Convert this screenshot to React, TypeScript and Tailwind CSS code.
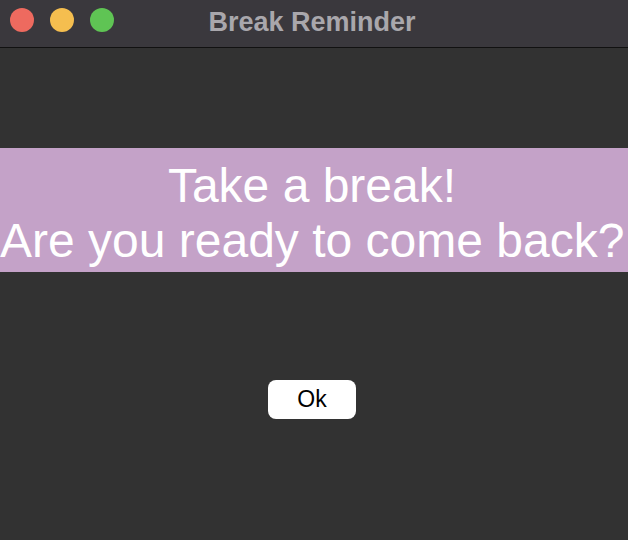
export default function App() {
  return (
    <div className="w-[628px] h-[540px] bg-[#323232] flex flex-col overflow-hidden" style={{ fontFamily: '"Liberation Sans", Arial, sans-serif' }}>
      <div className="relative h-[48px] shrink-0 bg-[#3a383d] border-b border-[#111]">
        <div className="absolute left-[10px] top-[8px] flex gap-[16px]">
          <span className="block w-6 h-6 rounded-full bg-[#ee6a5f]" />
          <span className="block w-6 h-6 rounded-full bg-[#f5be4f]" />
          <span className="block w-6 h-6 rounded-full bg-[#5fc454]" />
        </div>
        <div className="h-full flex items-center justify-center pr-[4px] pb-[3px]">
          <span className="text-[27px] font-bold text-[#a9a7ac] leading-none">Break Reminder</span>
        </div>
      </div>

      <div className="mt-[100px] bg-[#c4a2c8] pt-[10px] pb-[4px] text-center text-white text-[48px] leading-[55px] whitespace-nowrap">
        <div className="pr-[4px]">Take a break!</div>
        <div className="pr-[4px]">Are you ready to come back?</div>
      </div>

      <div className="mt-[108px] flex justify-center">
        <button className="w-[88px] h-[39px] rounded-[8px] bg-white text-black text-[23px] leading-none translate-x-[-2px]">
          Ok
        </button>
      </div>
    </div>
  );
}
